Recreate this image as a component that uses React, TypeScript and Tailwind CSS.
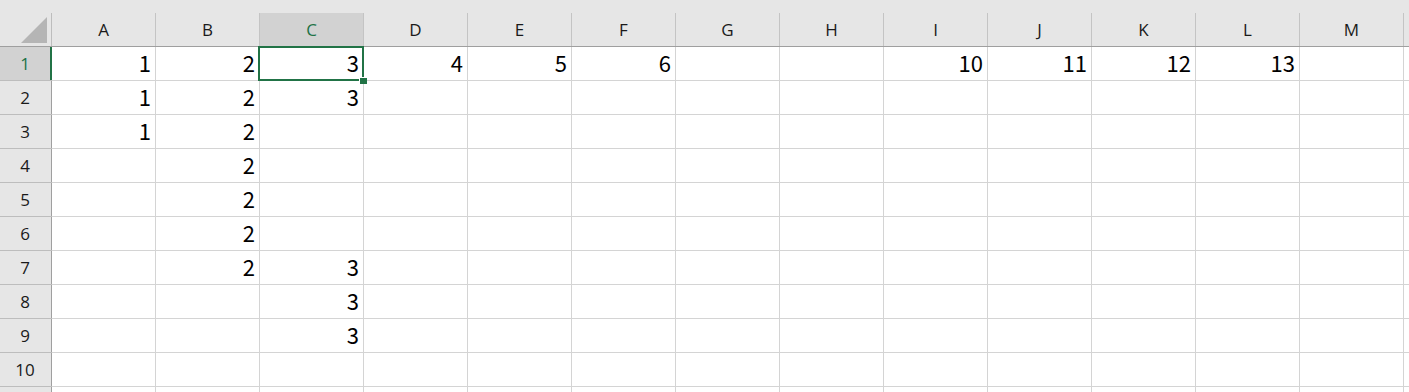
import React from "react";

const COLS = ["A", "B", "C", "D", "E", "F", "G", "H", "I", "J", "K", "L", "M"];

const DATA: Record<number, Record<string, string>> = {
  1: { A: "1", B: "2", C: "3", D: "4", E: "5", F: "6", I: "10", J: "11", K: "12", L: "13" },
  2: { A: "1", B: "2", C: "3" },
  3: { A: "1", B: "2" },
  4: { B: "2" },
  5: { B: "2" },
  6: { B: "2" },
  7: { B: "2", C: "3" },
  8: { C: "3" },
  9: { C: "3" },
  10: {},
  11: {},
};

const headFont = { fontFamily: '"Open Sans", "Noto Sans", sans-serif' };
const cellFont = { fontFamily: '"Noto Sans CJK KR", "Noto Sans", sans-serif' };

export default function App() {
  const rows = [1, 2, 3, 4, 5, 6, 7, 8, 9, 10, 11];
  return (
    <div className="w-[1409px] h-[392px] overflow-hidden bg-white select-none">
      {/* header row */}
      <div className="flex h-[47px] bg-[#e6e6e6] border-b border-[#9f9f9f]">
        <div className="w-[52px] shrink-0 pt-[13px]">
          <div className="h-[33px] border-r border-[#bdbdbd] flex items-end justify-end pr-[3px] pb-[2px]">
            <svg width="27" height="27" viewBox="0 0 27 27">
              <polygon points="26,0 26,26 0,26" fill="#b5b5b5" />
            </svg>
          </div>
        </div>
        {COLS.map((c) => (
          <div key={c} className="w-[104px] shrink-0 pt-[13px]">
            <div
              className={
                "h-[33px] border-r border-[#c4c4c4] flex items-center justify-center text-[17px] " +
                (c === "C" ? "bg-[#d2d2d2] text-[#217346]" : "text-[#1a1a1a]")
              }
              style={headFont}
            >
              {c}
            </div>
          </div>
        ))}
        <div className="flex-1" />
      </div>
      {/* body */}
      {rows.map((r) => (
        <div key={r} className="flex h-[34px]">
          <div
            className={
              "w-[52px] shrink-0 h-[34px] border-b border-[#bdbdbd] flex " +
              (r === 1 ? "bg-[#d2d2d2]" : "bg-[#e6e6e6]")
            }
          >
            <div
              className={
                "w-[50px] flex items-center justify-center text-[17px] " +
                (r === 1 ? "text-[#217346]" : "text-[#1a1a1a]")
              }
              style={headFont}
            >
              {r <= 10 ? r : ""}
            </div>
            <div className={"w-[2px] flex " + (r === 1 ? "bg-[#217346]" : "")}>
              {r === 1 ? null : <div className="ml-[1px] w-[1px] bg-[#9f9f9f]" />}
            </div>
          </div>
          {COLS.map((c) => {
            const v = DATA[r]?.[c] ?? "";
            const sel = r === 1 && c === "C";
            return (
              <div
                key={c}
                className="relative w-[104px] shrink-0 h-[34px] border-r border-b border-[#d4d4d4] flex items-center justify-end pr-[4px] text-[22px] text-black leading-none"
                style={cellFont}
              >
                <span className="pb-[3px]">{v}</span>
                {sel && (
                  <div className="absolute z-10 left-[-2px] top-[-1px] w-[106px] h-[35px] border-2 border-[#217346]">
                    <div className="absolute right-[-5px] bottom-[-5px] w-[8px] h-[7px] bg-[#217346] border-l border-t border-white" />
                  </div>
                )}
              </div>
            );
          })}
          <div className="flex-1 border-b border-[#d4d4d4]" />
        </div>
      ))}
    </div>
  );
}
